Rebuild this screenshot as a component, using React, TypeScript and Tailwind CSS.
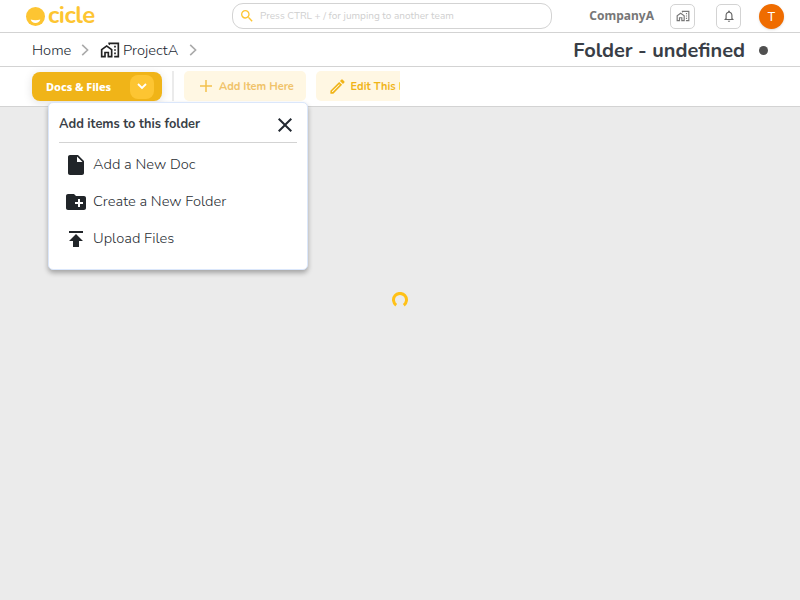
import React from "react";
import {
  MdAdd,
  MdClose,
  MdCreateNewFolder,
  MdInsertDriveFile,
  MdNotificationsNone,
  MdOutlineEdit,
  MdOutlineHomeWork,
  MdPublish,
  MdSearch,
} from "react-icons/md";

function Logo() {
  return (
    <div className="flex items-center gap-[3px] text-[#fdc532]">
      <svg width="19" height="19" viewBox="0 0 19 19">
        <circle cx="9.5" cy="9.5" r="9.5" fill="#fdc532" />
        <path d="M4.700 12.600c3 .8 6.600.8 9.600 0-.5 2.300-2.400 3.500-4.800 3.500S5.200 14.900 4.700 12.600z" fill="#fff" />
      </svg>
      <span className="h-8 text-[24px] leading-[30px] font-bold tracking-[-0.5px]">cicle</span>
    </div>
  );
}

function ChevronRight({ className = "" }: { className?: string }) {
  return (
    <svg width="8" height="12" viewBox="0 0 8 12" className={className}>
      <path d="M1.200.8 6.600 6 1.200 11.200" fill="none" stroke="#aaa" strokeWidth="1.6" />
    </svg>
  );
}

function Header() {
  return (
    <header className="flex h-[33px] items-center border-b border-[#d3d3d3] bg-white pr-4 pl-[26px]">
      <div className="w-[206px]">
        <Logo />
      </div>
      <div className="flex h-[26px] w-[320px] items-center rounded-[11px] border border-[#d3d3d3] pl-[6px]">
        <MdSearch size={16} color="#fdc532" />
        <span className="ml-[5px] text-[10px] whitespace-nowrap text-[#cfcfcf]">
          Press CTRL + / for jumping to another team
        </span>
      </div>
      <div className="ml-auto flex items-center">
        <span className="mr-[16px] font-['Noto_Sans','Open_Sans',sans-serif] text-[12px] font-bold text-[#777]">
          CompanyA
        </span>
        <div className="mr-[21px] flex h-[25px] w-[25px] items-center justify-center rounded-[5px] border border-[#d3d3d3]">
          <MdOutlineHomeWork size={14} color="#777" />
        </div>
        <div className="mr-[18px] flex h-[25px] w-[25px] items-center justify-center rounded-[5px] border border-[#d3d3d3]">
          <MdNotificationsNone size={14} color="#666" />
        </div>
        <div className="flex h-[25px] w-[25px] items-center justify-center rounded-full bg-[#ef6c00] pt-px font-['Roboto',sans-serif] text-[13px] text-white shadow-sm">
          T
        </div>
      </div>
    </header>
  );
}

function Breadcrumb() {
  return (
    <nav className="flex h-[34px] items-center border-b border-[#d3d3d3] bg-white pt-px pr-8 pl-8 text-[14.7px] font-light text-[#222831]">
      <span className="w-[49px] pt-px">Home</span>
      <ChevronRight className="mr-[11px]" />
      <MdOutlineHomeWork size={20} color="#222" />
      <span className="ml-[3px] w-[66px] pt-px">ProjectA</span>
      <ChevronRight />
      <h1 className="ml-auto pt-[2px] text-[20px] font-bold whitespace-nowrap text-[#393e46]">
        Folder - undefined
      </h1>
      <span className="ml-[14px] h-[9px] w-[9px] rounded-full bg-[#505050]" />
    </nav>
  );
}

function AddMenu() {
  return (
    <div className="absolute top-[35px] left-[48px] h-[168px] w-[260px] rounded-[5px] border border-[#dbe7fb] bg-white px-[10px] shadow-[0_3px_5px_rgba(0,0,0,0.3)]">
      <div className="flex h-[40px] items-center justify-between border-b border-[#d3d3d3]">
        <span className="pt-1 text-[12.8px] font-bold text-[#393e46]">Add items to this folder</span>
        <MdClose size={24} color="#222831" className="mt-1" />
      </div>
      <ul className="pt-[3px] text-[14.7px] font-light text-[#2b3036]">
        <li className="flex h-[37px] items-center gap-[5px] pl-[5px]">
          <MdInsertDriveFile size={24} color="#212529" />
          <span>Add a New Doc</span>
        </li>
        <li className="flex h-[37px] items-center gap-[5px] pl-[5px]">
          <MdCreateNewFolder size={24} color="#212529" />
          <span>Create a New Folder</span>
        </li>
        <li className="flex h-[37px] items-center gap-[5px] pl-[5px]">
          <MdPublish size={24} color="#212529" />
          <span>Upload Files</span>
        </li>
      </ul>
    </div>
  );
}

function Toolbar() {
  return (
    <div className="relative h-10 border-b border-[#d3d3d3] bg-white">
      <div className="flex h-full w-[400px] items-start overflow-hidden pt-1 pl-8 whitespace-nowrap">
        <button className="mt-[1px] flex h-[29px] w-[130px] shrink-0 items-center justify-between rounded-[8px] bg-[#f0b418] pr-2 pl-[14px] shadow-[0_2px_10px_rgba(0,0,0,0.12)]">
          <span className="pt-px font-['Noto_Sans','Open_Sans',sans-serif] text-[11px] font-extrabold tracking-[-0.05px] text-white">
            Docs &amp; Files
          </span>
          <span className="flex h-6 w-6 items-center justify-center rounded-[8px] bg-[#fdc532]">
            <svg width="10" height="7" viewBox="0 0 10 7">
              <path d="M1 1l4 4 4-4" fill="none" stroke="#fff" strokeWidth="1.8" />
            </svg>
          </span>
        </button>
        <span className="mr-[10px] ml-[10px] h-[30px] w-[2px] shrink-0 bg-[#ebebeb]" />
        <button className="flex h-[30px] w-[122px] shrink-0 items-center rounded-[5px] bg-[#fff7e3] pl-[13px] text-[11px] font-bold text-[#f0c36a]">
          <svg width="18" height="18" viewBox="0 0 18 18">
            <path d="M9 3v12M3 9h12" fill="none" stroke="#f3c14c" strokeWidth="1.5" />
          </svg>
          <span className="ml-1 pt-[2px]">Add Item Here</span>
        </button>
        <button className="ml-[10px] flex h-[30px] w-[140px] shrink-0 items-center rounded-[5px] bg-[#fff7e3] pl-3 text-[11px] font-bold text-[#f0b418]">
          <MdOutlineEdit size={19} />
          <span className="ml-[3.500px] pt-[2px]">Edit This Folder</span>
        </button>
      </div>
      <AddMenu />
    </div>
  );
}

export default function App() {
  return (
    <div className="flex h-[600px] w-[800px] flex-col overflow-hidden bg-[#ebebeb] font-['Nunito','Lato',sans-serif]">
      <Header />
      <Breadcrumb />
      <Toolbar />
      <main className="flex flex-1 justify-center pt-[185px]">
        <svg width="16" height="16" viewBox="0 0 16 16">
          <path d="M4.2 13.200A6.500 6.500 0 1 1 11.800 13.200" fill="none" stroke="#ffc118" strokeWidth="3" />
        </svg>
      </main>
    </div>
  );
}
